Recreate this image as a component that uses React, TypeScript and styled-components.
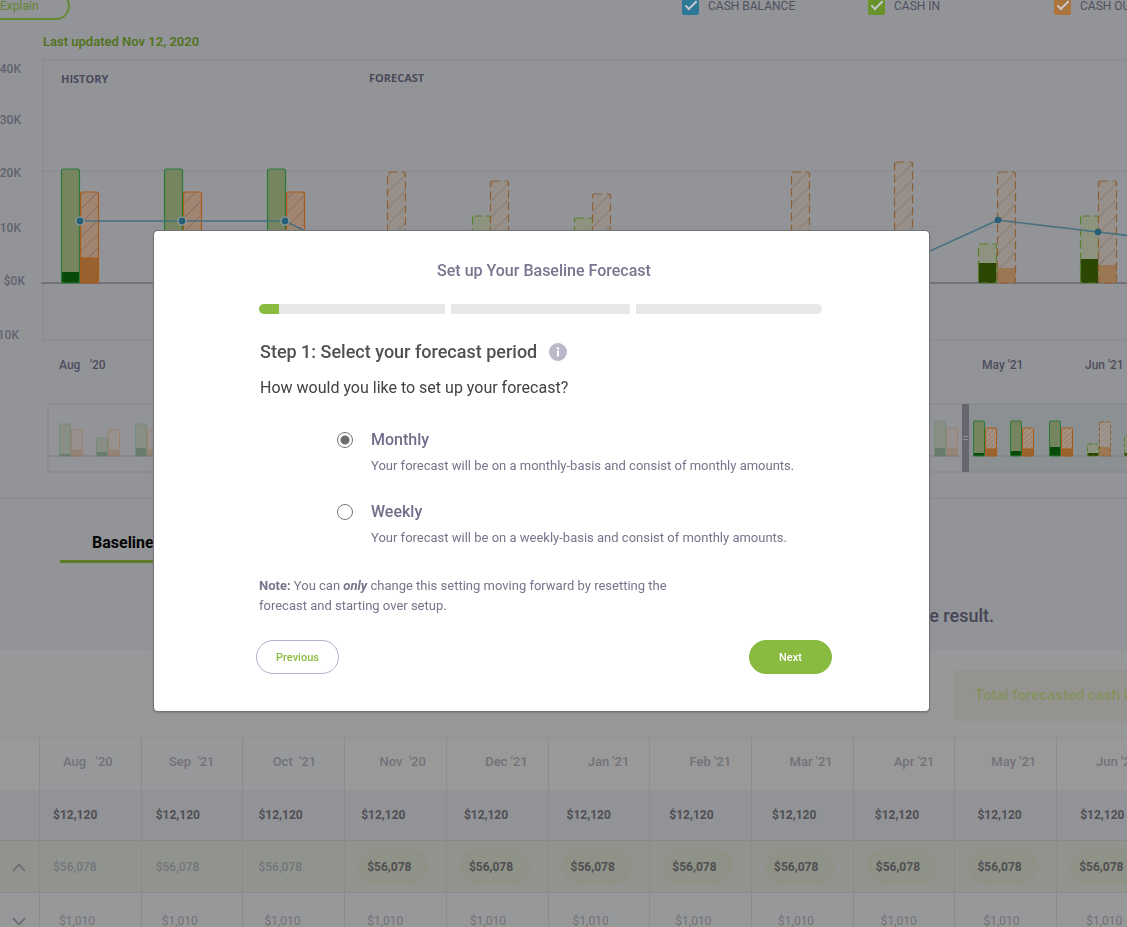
import React, { useState } from "react";
import styled, { createGlobalStyle } from "styled-components";

const GlobalStyle = createGlobalStyle`
  *, *::before, *::after { box-sizing: border-box; }
  body {
    margin: 0;
    overflow: hidden;
    background: #979899;
    font-family: Roboto, "Liberation Sans", sans-serif;
  }
  p, h1, h2 { margin: 0; }
`;

const Page = styled.div`
  height: 100vh;
  overflow: hidden;
  background: #979899;
`;

const Upper = styled.section`
  background: #939498;
  overflow: hidden;
`;

const Toolbar = styled.header`
  display: flex;
  align-items: center;
  justify-content: space-between;
  height: 28px;
  margin-top: -8px;
`;

const ExplainButton = styled.button`
  width: 70px;
  height: 28px;
  padding: 0;
  border: 2px solid #668a35;
  border-left: 0;
  border-radius: 0 14px 14px 0;
  background: transparent;
  color: #5f8330;
  font: 400 12px Roboto, sans-serif;
  text-align: left;
`;

const Legend = styled.div`
  display: grid;
  grid-template-columns: repeat(3, 186px);
  margin-right: -113px;
`;

const LegendItem = styled.label`
  display: flex;
  align-items: center;
  gap: 9px;
  color: #50505f;
  font-size: 12px;
  line-height: 20px;
  white-space: nowrap;
`;

const LegendCheck = styled.input<{ $color: string }>`
  appearance: none;
  display: grid;
  place-items: center;
  width: 17px;
  height: 17px;
  margin: 0;
  border-radius: 2px;
  background: ${(p) => p.$color};
  &:checked::after {
    content: "";
    width: 6px;
    height: 12px;
    margin-bottom: 4px;
    border: solid #c9cacd;
    border-width: 0 2px 2px 0;
    transform: rotate(45deg);
  }
`;

const Updated = styled.p`
  margin-top: 12px;
  padding-left: 43px;
  color: #527320;
  font-size: 13px;
  font-weight: 600;
  line-height: 20px;
`;

const ChartSvg = styled.svg`
  display: block;
  width: 100%;
  font-family: Roboto, sans-serif;
  font-size: 12px;
  font-weight: 500;
`;

const Scenario = styled.div`
  margin-top: 18px;
  padding: 32px 0 22px;
  border-top: 1px solid #88898d;
`;

const Tab = styled.button`
  display: block;
  margin-left: 60px;
  padding: 0 32px 5px;
  border: 0;
  border-bottom: 3px solid #5b7b27;
  background: transparent;
  color: #050507;
  font: 700 16px/24px Roboto, sans-serif;
`;

const ResultText = styled.p`
  margin-top: 41px;
  padding-right: 133px;
  color: #454556;
  font-size: 18px;
  font-weight: 500;
  line-height: 24px;
  text-align: right;
`;

const TotalRow = styled.div`
  display: flex;
  justify-content: flex-end;
  padding: 20px 0 16px;
`;

const TotalBox = styled.div`
  width: 173px;
  padding-left: 21px;
  overflow: hidden;
  border-radius: 4px 0 0 4px;
  background: #949390;
  color: #83925f;
  font-size: 15px;
  font-weight: 500;
  line-height: 51px;
  white-space: nowrap;
`;

const Table = styled.table`
  table-layout: fixed;
  width: calc(100% + 32px);
  border-collapse: separate;
  border-spacing: 0;
  font-size: 12px;
`;

const RowToggleCol = styled.col`
  width: 40px;
`;

type Tone = "head" | "total" | "cashIn" | "plain";
const toneBackground: Record<Tone, string> = {
  head: "#999999",
  total: "#929396",
  cashIn: "#91948e",
  plain: "#979899",
};
const toneHeight: Record<Tone, number> = { head: 53, total: 51, cashIn: 52, plain: 57 };

const Row = styled.tr<{ $tone: Tone }>`
  height: ${(p) => toneHeight[p.$tone]}px;
  background: ${(p) => toneBackground[p.$tone]};
`;

const edge = "1px solid #8b8c8d";

const HeadCell = styled.th<{ $past?: boolean }>`
  padding: 0 ${(p) => (p.$past ? 28 : 20)}px 6px 0;
  border-top: 1px solid #8f9090;
  border-right: ${edge};
  background: ${(p) => (p.$past ? "#979899" : "transparent")};
  color: #727279;
  font-size: 13px;
  font-weight: 500;
  text-align: right;
  white-space: pre;
`;

const Cell = styled.td<{ $inset?: number; $strong?: boolean; $faint?: boolean }>`
  padding: 0 0 0 ${(p) => p.$inset ?? 0}px;
  border-right: ${edge};
  border-bottom: 1px solid #87898a;
  color: ${(p) => (p.$strong ? "#4f4f54" : p.$faint ? "#727278" : "#73747c")};
  font-weight: ${(p) => (p.$strong ? 700 : p.$faint ? 400 : 500)};
`;

const Amount = styled.button`
  display: block;
  width: 70px;
  height: 35px;
  padding: 0 0 0 8px;
  border: 1px solid #8e9287;
  border-radius: 18px;
  background: #8f9286;
  color: #4f4f54;
  font: 700 12px Roboto, sans-serif;
  text-align: left;
`;

const Toggle = styled.button`
  display: block;
  width: 14px;
  height: 14px;
  margin-left: 12px;
  padding: 0;
  border: 0;
  background: transparent;
`;

const Backdrop = styled.div`
  position: fixed;
  inset: 0;
  display: flex;
  align-items: flex-start;
  justify-content: center;
  padding: 231px 44px 0 0;
`;

const Dialog = styled.div`
  width: 775px;
  padding: 30px 97px 37px 102px;
  border-radius: 4px;
  background: #fff;
  box-shadow: 0 0 0 1px #737477, 0 1px 2px 1px #7d7e80;
`;

const DialogTitle = styled.h1`
  color: #76768f;
  font-size: 16px;
  font-weight: 500;
  line-height: 20px;
  text-align: center;
`;

const Progress = styled.div`
  display: grid;
  grid-template-columns: 186fr 179fr 186fr;
  gap: 6px;
  height: 10px;
  margin: 23px 10px 0 3px;
`;

const Segment = styled.div`
  overflow: hidden;
  background: #e7e7e7;
  &:first-child { border-radius: 5px 0 0 5px; }
  &:last-child { border-radius: 0 5px 5px 0; }
`;

const SegmentFill = styled.div`
  width: 20px;
  height: 100%;
  background: #89bb40;
`;

const Body = styled.div`
  padding: 0 4px;
`;

const StepRow = styled.div`
  display: flex;
  align-items: center;
  gap: 12px;
  margin-top: 26px;
`;

const StepTitle = styled.h2`
  color: #515151;
  font-size: 18px;
  font-weight: 500;
  line-height: 24px;
`;

const InfoButton = styled.button`
  width: 18px;
  height: 18px;
  padding: 0;
  border: 0;
  background: transparent;
  svg { display: block; }
`;

const Question = styled.p`
  margin-top: 12px;
  color: #424242;
  font-size: 16px;
  line-height: 24px;
`;

const Options = styled.div`
  display: grid;
  gap: 24px;
  margin-top: 28px;
  padding-left: 77px;
`;

const Option = styled.label`
  display: grid;
  grid-template-columns: 16px 1fr;
  column-gap: 18px;
  row-gap: 4px;
  align-items: center;
`;

const Radio = styled.input`
  appearance: none;
  width: 16px;
  height: 16px;
  margin: 0;
  border: 1px solid #777;
  border-radius: 50%;
  background: #fff;
  &:checked {
    background: radial-gradient(circle, #6d6d6d 4px, #fff 5px);
  }
`;

const OptionName = styled.span`
  color: #6f6f8b;
  font-size: 16px;
  font-weight: 500;
  line-height: 24px;
`;

const OptionText = styled.span`
  grid-column: 2;
  color: #75758c;
  font-size: 13px;
  line-height: 20px;
  white-space: nowrap;
`;

const Note = styled.p`
  max-width: 450px;
  margin-top: 28px;
  padding-left: 3px;
  color: #75758c;
  font-size: 13px;
  line-height: 20px;
  b { font-weight: 700; }
`;

const Actions = styled.div`
  display: flex;
  justify-content: space-between;
  margin-top: 24px;
`;

const PillButton = styled.button<{ $primary?: boolean }>`
  width: 83px;
  height: 34px;
  padding: 0;
  border: 1px solid ${(p) => (p.$primary ? "#89bb40" : "#b5b1c8")};
  border-radius: 17px;
  background: ${(p) => (p.$primary ? "#89bb40" : "#fff")};
  color: ${(p) => (p.$primary ? "#fff" : "#89bb40")};
  font: 500 11px Roboto, sans-serif;
`;

type BarKind = "in" | "out";
interface BarProps {
  x: number;
  height: number;
  base?: number;
  kind: BarKind;
  forecast?: boolean;
  width?: number;
  zero?: number;
  small?: boolean;
}

const barPaint = {
  in: { fill: "#76855f", stroke: "#2b783b", base: "#0a4a08" },
  out: { fill: "#9e8672", stroke: "#a85c17", base: "#985a22" },
  inForecast: { fill: "#8d937f", stroke: "#56802d", base: "#2b4703" },
  outForecast: { fill: "#97908a", stroke: "#8d5f35", base: "#9c734a" },
};

function Bar({ x: left, height, base = 0, kind, forecast, width = 18, zero = 231, small }: BarProps) {
  const paint = barPaint[(kind + (forecast ? "Forecast" : "")) as keyof typeof barPaint];
  const x = left + 0.5;
  const top = zero - height;
  const hatch = small ? "hatchSmall" : forecast ? "hatchForecast" : "hatch";
  return (
    <g>
      <rect x={x} y={top} width={width} height={height} rx={small ? 1 : 2} fill={paint.fill} />
      {kind === "out" && <rect x={x} y={top} width={width} height={height} fill={`url(#${hatch})`} />}
      {base > 0 && (
        <rect x={x} y={zero - base} width={width} height={base} fill={paint.base} fillOpacity={kind === "out" ? 0.85 : 1} />
      )}
      {kind === "out" && base > 0 && !forecast && (
        <line x1={x} x2={x + width} y1={zero - base} y2={zero - base} stroke={paint.stroke} />
      )}
      <rect
        x={x}
        y={top}
        width={width}
        height={height}
        rx={small ? 1 : 2}
        fill="none"
        stroke={paint.stroke}
        strokeWidth={small ? 1 : 1.2}
        strokeDasharray={forecast ? (small ? "4 2" : "8 4") : undefined}
      />
    </g>
  );
}

const axisLabels: Array<[string, number, number]> = [
  ["$40K", 21, 16],
  ["$30K", 21, 67],
  ["$20K", 21, 120],
  ["$10K", 21, 175],
  ["$0K", 25, 228],
  ["-$10K", 19, 282],
];

const mainBars: BarProps[] = [
  { x: 61, height: 114, base: 11, kind: "in" },
  { x: 80, height: 91, base: 25, kind: "out" },
  { x: 164, height: 114, base: 11, kind: "in" },
  { x: 183, height: 91, base: 25, kind: "out" },
  { x: 267, height: 114, base: 11, kind: "in" },
  { x: 286, height: 91, base: 25, kind: "out" },
  { x: 387, height: 111, kind: "out", forecast: true },
  { x: 472, height: 67, kind: "in", forecast: true },
  { x: 490, height: 102, kind: "out", forecast: true },
  { x: 574, height: 65, kind: "in", forecast: true },
  { x: 592, height: 89, kind: "out", forecast: true },
  { x: 791, height: 111, kind: "out", forecast: true },
  { x: 894, height: 121, kind: "out", forecast: true },
  { x: 978, height: 39, base: 20, kind: "in", forecast: true },
  { x: 997, height: 111, base: 15, kind: "out", forecast: true },
  { x: 1080, height: 67, base: 24, kind: "in", forecast: true },
  { x: 1098, height: 102, base: 18, kind: "out", forecast: true },
];

const balance: Array<[number, number]> = [
  [80, 169],
  [182, 169],
  [285, 169],
  [388, 220],
  [895, 215],
  [998, 168],
  [1098, 180],
  [1201, 192],
];

function CashChart() {
  return (
    <ChartSvg height={344} role="img" aria-label="Cash forecast by month">
      <defs>
        <pattern id="hatch" width="14" height="14" patternUnits="userSpaceOnUse">
          <path d="M-2 16 L16 -2 M-2 2 L2 -2 M12 16 L16 12" stroke="#8f6860" strokeWidth="1" />
        </pattern>
        <pattern id="hatchForecast" width="16" height="16" patternUnits="userSpaceOnUse">
          <path d="M-2 18 L18 -2 M-2 2 L2 -2 M14 18 L18 14" stroke="#8c8072" strokeWidth="1.3" />
        </pattern>
        <pattern id="hatchSmall" width="5" height="5" patternUnits="userSpaceOnUse">
          <path d="M-1 6 L6 -1 M-1 1 L1 -1 M4 6 L6 4" stroke="#a89a90" strokeWidth="1.2" />
        </pattern>
      </defs>
      <g stroke="#88898e">
        <line x1="43" x2="100%" y1="8" y2="8" />
        <line x1="43" x2="100%" y1="64" y2="64" stroke="#8e8f93" />
        <line x1="41" x2="100%" y1="119" y2="119" />
        <line x1="43" x2="100%" y1="175" y2="175" stroke="#8e8f93" />
        <line x1="43" x2="100%" y1="288" y2="288" />
        <line x1="43" x2="43" y1="8" y2="289" />
      </g>
      <line x1="41" x2="100%" y1="231" y2="231" stroke="#68696d" strokeWidth="1.5" />
      <g fill="#626270" textAnchor="end">
        {axisLabels.map(([text, x, y]) => (
          <text key={text} x={x} y={y + 5}>{text}</text>
        ))}
      </g>
      <g fill="#4a4a5a" fontFamily="Open Sans, sans-serif" fontSize="11" fontWeight="700">
        <text x="61" y="31">HISTORY</text>
        <text x="369" y="30">FORECAST</text>
      </g>
      {mainBars.map((bar) => (
        <Bar key={bar.x} {...bar} />
      ))}
      <polyline points={balance.map((p) => p.join(",")).join(" ")} fill="none" stroke="#44707f" strokeWidth="1.5" />
      {balance.map(([x, y], i) => (
        <circle key={x} cx={x} cy={y} r={i < 3 ? 4 : 3.3} fill="#265e78" stroke={i < 3 ? "#93a0a8" : "none"} strokeWidth="1.2" />
      ))}
      <g fill="#4d4d5c">
        <text x="59" y="317">Aug</text>
        <text x="90" y="317">'20</text>
        <text x="982" y="317">May '21</text>
        <text x="1085" y="317">Jun '21</text>
      </g>
    </ChartSvg>
  );
}

const small = { width: 11, zero: 60, small: true };
const fadedBars: BarProps[] = [
  { x: 59, height: 32, base: 2, kind: "in", ...small },
  { x: 71, height: 26, base: 6, kind: "out", ...small },
  { x: 96, height: 18, base: 4, kind: "in", ...small },
  { x: 108, height: 26, base: 6, kind: "out", ...small },
  { x: 135, height: 32, base: 8, kind: "in", ...small },
  { x: 147, height: 26, base: 6, kind: "out", ...small },
  { x: 934, height: 35, base: 8, kind: "in", ...small },
  { x: 946, height: 28, base: 8, kind: "out", ...small },
];
const selectedBars: BarProps[] = [
  { x: 973, height: 35, base: 3, kind: "in", ...small },
  { x: 985, height: 28, base: 7, kind: "out", ...small },
  { x: 1010, height: 35, base: 5, kind: "in", ...small },
  { x: 1022, height: 28, base: 7, kind: "out", ...small },
  { x: 1049, height: 35, base: 9, kind: "in", ...small },
  { x: 1061, height: 28, base: 7, kind: "out", ...small },
  { x: 1087, height: 12, base: 3, kind: "in", forecast: true, ...small },
  { x: 1099, height: 34, base: 9, kind: "out", forecast: true, ...small },
  { x: 1124, height: 20, base: 3, kind: "in", forecast: true, ...small },
];

function Overview() {
  return (
    <ChartSvg height={84} role="img" aria-label="Forecast range">
      <rect x="968" y="8" width="100%" height="68" fill="#8b9092" />
      <g stroke="#85868a">
        <line x1="48" x2="100%" y1="8" y2="8" />
        <line x1="48" x2="100%" y1="76" y2="76" />
        <line x1="48" x2="48" y1="8" y2="76" />
        <line x1="48" x2="100%" y1="60" y2="60" stroke="#7e7f83" />
      </g>
      <g opacity="0.3">
        {fadedBars.map((bar) => (
          <Bar key={bar.x} {...bar} />
        ))}
      </g>
      {selectedBars.map((bar) => (
        <Bar key={bar.x} {...bar} />
      ))}
      <rect x="962" y="8" width="7" height="68" fill="#666670" />
      <path d="M963 40.500 H968 M963 43.500 H968" stroke="#8f8f98" />
    </ChartSvg>
  );
}

const months = [
  "Aug   '20",
  "Sep  '21",
  "Oct  '21",
  "Nov  '20",
  "Dec '21",
  "Jan '21",
  "Feb '21",
  "Mar '21",
  "Apr '21",
  "May '21",
  "Jun '21",
];
const HISTORY_MONTHS = 3;

function Chevron({ up }: { up?: boolean }) {
  return (
    <svg width="14" height="14" viewBox="0 0 14 14" fill="none" stroke="#6a6b70" strokeWidth="1.8">
      <path d={up ? "M1 11 L7 4.500 L13 11" : "M1 4 L7 10.500 L13 4"} />
    </svg>
  );
}

function ForecastTable() {
  return (
    <Table>
      <colgroup>
        <RowToggleCol />
        {months.map((m) => (
          <col key={m} />
        ))}
      </colgroup>
      <thead>
        <Row $tone="head">
          <HeadCell aria-label="Expand" />
          {months.map((m, i) => (
            <HeadCell key={m} scope="col" $past={i < HISTORY_MONTHS}>{m}</HeadCell>
          ))}
        </Row>
      </thead>
      <tbody>
        <Row $tone="total">
          <Cell />
          {months.map((m, i) => (
            <Cell key={m} $inset={13 + i} $strong>$12,120</Cell>
          ))}
        </Row>
        <Row $tone="cashIn">
          <Cell>
            <Toggle aria-label="Collapse row"><Chevron up /></Toggle>
          </Cell>
          {months.map((m, i) =>
            i < HISTORY_MONTHS ? (
              <Cell key={m} $inset={13 + i}>$56,078</Cell>
            ) : (
              <Cell key={m} $inset={13}><Amount>$56,078</Amount></Cell>
            )
          )}
        </Row>
        <Row $tone="plain">
          <Cell>
            <Toggle aria-label="Expand row"><Chevron /></Toggle>
          </Cell>
          {months.map((m, i) => (
            <Cell key={m} $inset={19 + i} $faint>$1,010</Cell>
          ))}
        </Row>
      </tbody>
    </Table>
  );
}

const legendItems = [
  { label: "CASH BALANCE", color: "#2d7896" },
  { label: "CASH IN", color: "#68932b" },
  { label: "CASH OUT", color: "#ab743c" },
];

const periods = [
  { id: "monthly", name: "Monthly", text: "Your forecast will be on a monthly-basis and consist of monthly amounts." },
  { id: "weekly", name: "Weekly", text: "Your forecast will be on a weekly-basis and consist of monthly amounts." },
];

function SetupDialog() {
  const [period, setPeriod] = useState("monthly");
  return (
    <Backdrop>
      <Dialog role="dialog" aria-modal="true" aria-labelledby="setup-title">
        <DialogTitle id="setup-title">Set up Your Baseline Forecast</DialogTitle>
        <Progress>
          <Segment><SegmentFill /></Segment>
          <Segment />
          <Segment />
        </Progress>
        <Body>
          <StepRow>
            <StepTitle>Step 1: Select your forecast period</StepTitle>
            <InfoButton aria-label="About forecast periods">
              <svg width="18" height="18" viewBox="0 0 18 18">
                <circle cx="9" cy="9" r="9" fill="#b9b9ca" />
                <circle cx="9" cy="5.300" r="1.200" fill="#fff" />
                <rect x="8" y="7.500" width="2" height="6" fill="#fff" />
              </svg>
            </InfoButton>
          </StepRow>
          <Question>How would you like to set up your forecast?</Question>
          <Options role="radiogroup" aria-label="Forecast period">
            {periods.map((p) => (
              <Option key={p.id}>
                <Radio type="radio" name="period" checked={period === p.id} onChange={() => setPeriod(p.id)} />
                <OptionName>{p.name}</OptionName>
                <OptionText>{p.text}</OptionText>
              </Option>
            ))}
          </Options>
        </Body>
        <Note>
          <b>Note:</b> You can <b><i>only</i></b> change this setting moving forward by resetting the forecast and
          starting over setup.
        </Note>
        <Actions>
          <PillButton>Previous</PillButton>
          <PillButton $primary>Next</PillButton>
        </Actions>
      </Dialog>
    </Backdrop>
  );
}

export default function App() {
  return (
    <>
      <GlobalStyle />
      <Page>
        <Upper>
          <Toolbar>
            <ExplainButton>Explain</ExplainButton>
            <Legend>
              {legendItems.map((item) => (
                <LegendItem key={item.label}>
                  <LegendCheck type="checkbox" defaultChecked $color={item.color} />
                  {item.label}
                </LegendItem>
              ))}
            </Legend>
          </Toolbar>
          <Updated>Last updated Nov 12, 2020</Updated>
          <CashChart />
          <Overview />
          <Scenario>
            <Tab>Baseline</Tab>
            <ResultText>the result.</ResultText>
          </Scenario>
        </Upper>
        <TotalRow>
          <TotalBox>Total forecasted cash in</TotalBox>
        </TotalRow>
        <ForecastTable />
      </Page>
      <SetupDialog />
    </>
  );
}
